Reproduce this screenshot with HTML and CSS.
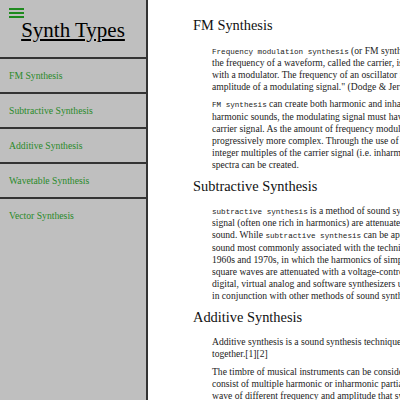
FILE: index.html
```html
<!DOCTYPE html>
<html lang="en">
<head>
<meta charset="utf-8">
<title>Synth Types</title>
<link rel="stylesheet" href="styles.css">
</head>
<body>
<div class="layout">
  <aside class="sidebar">
    <div class="brand">
      <span class="menu-toggle" aria-label="Menu"><span></span><span></span><span></span></span>
      <h1 class="title"><a href="#">Synth Types</a></h1>
    </div>
    <nav class="nav">
      <a class="nav-item" href="#fm">FM Synthesis</a>
      <a class="nav-item" href="#subtractive">Subtractive Synthesis</a>
      <a class="nav-item" href="#additive">Additive Synthesis</a>
      <a class="nav-item" href="#wavetable">Wavetable Synthesis</a>
      <a class="nav-item" href="#vector">Vector Synthesis</a>
    </nav>
  </aside>
  <main class="content">
    <section id="fm" class="section">
      <h2 class="section-title">FM Synthesis</h2>
      <p><code>Frequency modulation synthesis</code> (or FM synthesis) is a form of sound synthesis whereby<br>
      the frequency of a waveform, called the carrier, is changed by modulating its frequency<br>
      with a modulator. The frequency of an oscillator is altered "in accordance with the<br>
      amplitude of a modulating signal." (Dodge &amp; Jerse 1997, p.115)</p>
      <p><code>FM synthesis</code> can create both harmonic and inharmonic sounds. To synthesize<br>
      harmonic sounds, the modulating signal must have a harmonic relationship to the original<br>
      carrier signal. As the amount of frequency modulation increases, the sound grows<br>
      progressively more complex. Through the use of modulators with frequencies that are non-<br>
      integer multiples of the carrier signal (i.e. inharmonic), inharmonic bells and percussive<br>
      spectra can be created.</p>
    </section>
    <section id="subtractive" class="section">
      <h2 class="section-title">Subtractive Synthesis</h2>
      <p><code>subtractive synthesis</code> is a method of sound synthesis in which partials of an audio<br>
      signal (often one rich in harmonics) are attenuated by a filter to alter the timbre of the<br>
      sound. While <code>subtractive synthesis</code> can be applied to any source audio signal, the<br>
      sound most commonly associated with the technique is that of analog synthesizers of the<br>
      1960s and 1970s, in which the harmonics of simple waveforms such as sawtooth, pulse or<br>
      square waves are attenuated with a voltage-controlled resonant low-pass filter. Many<br>
      digital, virtual analog and software synthesizers use subtractive synthesis, sometimes<br>
      in conjunction with other methods of sound synthesis.</p>
    </section>
    <section id="additive" class="section">
      <h2 class="section-title">Additive Synthesis</h2>
      <p>Additive synthesis is a sound synthesis technique that creates timbre by adding sine waves<br>
      together.[1][2]</p>
      <p>The timbre of musical instruments can be considered in the light of Fourier theory to<br>
      consist of multiple harmonic or inharmonic partials or overtones. Each partial is a sine<br>
      wave of different frequency and amplitude that swells and decays over time due to<br>
      modulation from an ADSR envelope or low frequency oscillator.</p>
    </section>
  </main>
</div>
</body>
</html>
```
FILE: styles.css
```css
html, body {
  margin: 0;
  padding: 0;
  overflow: hidden;
  background: #fff;
}

body {
  font-family: "Liberation Serif", "Times New Roman", serif;
  color: #222;
}

.layout {
  display: flex;
  align-items: stretch;
  min-height: 400px;
}

.sidebar {
  flex: none;
  width: 146px;
  background: #bfbfbf;
  border-right: 2px solid #333;
  min-height: 400px;
}

.brand {
  padding: 7.5px 9px 16px;
  height: 33.5px;
}

.menu-toggle {
  display: flex;
  flex-direction: column;
  gap: 2px;
  width: 15px;
}

.menu-toggle span {
  display: block;
  height: 2px;
  background: #1f8a1f;
}

.title {
  margin: 1px 0 0;
  font-size: 21px;
  font-weight: normal;
  line-height: 23px;
  text-align: center;
}

.title a {
  color: #000;
  text-decoration: underline;
}

.nav {
  display: flex;
  flex-direction: column;
}

.nav-item {
  display: flex;
  align-items: center;
  height: 33px;
  padding: 0 9px;
  border-top: 2px solid #333;
  font-size: 9.7px;
  color: #2a8a2a;
  text-decoration: none;
}

.content {
  flex: none;
  width: 420px;
  padding: 17px 0 0 45px;
}

.section-title {
  margin: 6px 0 11px;
  font-size: 14.4px;
  font-weight: normal;
  line-height: 16.5px;
  color: #111;
}

.section:first-child .section-title {
  margin-top: 0;
}

.section p {
  margin: 0 0 5px 19px;
  font-size: 9.6px;
  line-height: 12.2px;
  white-space: nowrap;
}

code {
  font-family: "Liberation Mono", "Courier New", monospace;
  font-size: 7.6px;
  line-height: 1;
}
```
